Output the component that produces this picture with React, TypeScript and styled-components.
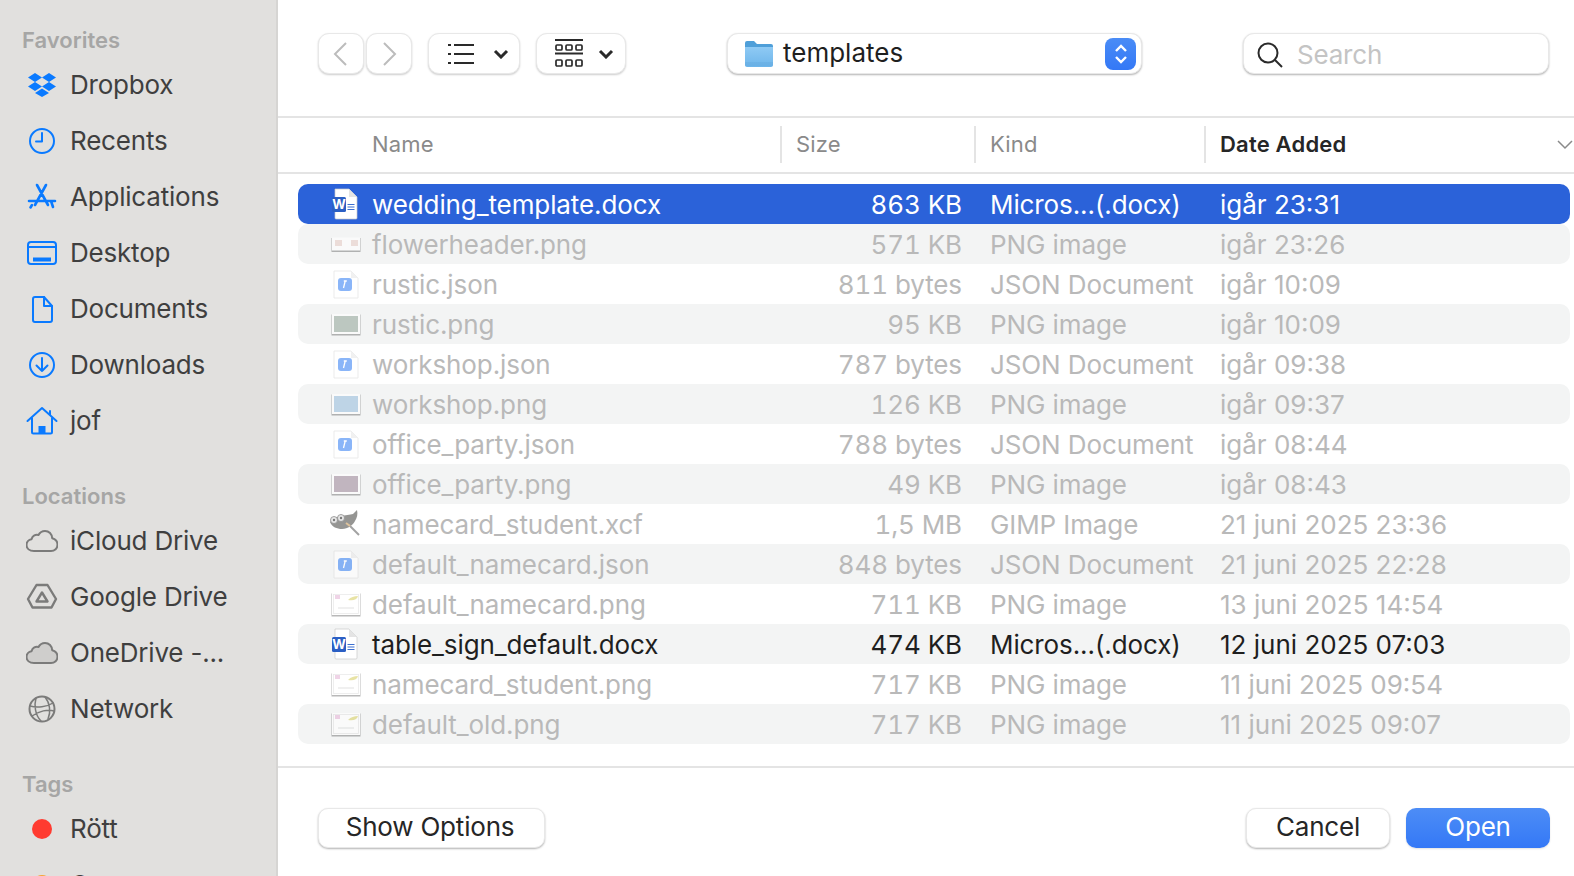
import styled, { createGlobalStyle } from "styled-components";
import type { ReactNode } from "react";

const GlobalStyle = createGlobalStyle`
  html, body {
    margin: 0;
    padding: 0;
    background: #fff;
    overflow: hidden;
  }
  * {
    box-sizing: border-box;
  }
`;

const COLUMNS = "74px 408px 194px 230px 1fr";

const Window = styled.div`
  width: 1574px;
  height: 876px;
  display: flex;
  overflow: hidden;
  font-family: Inter, "Liberation Sans", sans-serif;
  font-size: 26px;
  letter-spacing: -0.2px;
  color: #1f1f1f;
`;

const Sidebar = styled.aside`
  width: 278px;
  flex: none;
  padding: 24px 0 0 22px;
  background: #e1e0de;
  border-right: 2px solid #d6d5d3;
`;

const SectionTitle = styled.div<{ $first?: boolean }>`
  height: 32px;
  margin-top: ${({ $first }) => ($first ? 0 : "32px")};
  line-height: 32px;
  font-size: 22px;
  font-weight: 600;
  letter-spacing: 0;
  color: #a6a6a5;
`;

const SideItem = styled.div`
  height: 56px;
  display: flex;
  align-items: center;
  padding-top: 1px;
  color: #3f3f3f;
`;

const SideIcon = styled.span`
  width: 48px;
  height: 34px;
  flex: none;
  display: flex;
  align-items: center;
  padding-left: 4px;
  svg {
    display: block;
  }
`;

const TagDot = styled.span<{ $color: string }>`
  width: 20px;
  height: 20px;
  margin-left: 6px;
  border-radius: 50%;
  background: ${({ $color }) => $color};
`;

const Main = styled.main`
  flex: 1;
  min-width: 0;
  display: flex;
  flex-direction: column;
`;

const Toolbar = styled.div`
  height: 118px;
  flex: none;
  display: flex;
  align-items: flex-start;
  padding: 33px 25px 0 40px;
  border-bottom: 2px solid #e4e4e4;
`;

const ToolButton = styled.div<{ $width: number; $gap?: number }>`
  width: ${({ $width }) => $width}px;
  height: 41px;
  flex: none;
  margin-left: ${({ $gap }) => $gap ?? 0}px;
  display: flex;
  align-items: center;
  justify-content: center;
  gap: ${({ $width }) => ($width > 91 ? 18 : 15)}px;
  padding-left: ${({ $width }) => ($width > 60 ? 7 : 0)}px;
  background: #fff;
  border: 1px solid #e8e8e8;
  border-radius: 11px;
  box-shadow: 0 1px 2px rgba(0, 0, 0, 0.2);
`;

const PathControl = styled.div`
  width: 415px;
  height: 41px;
  flex: none;
  margin-left: 101px;
  display: flex;
  align-items: center;
  padding: 0 5px 0 16px;
  border: 1px solid #e8e8e8;
  border-radius: 11px;
  background: #fff;
  box-shadow: 0 1px 2px rgba(0, 0, 0, 0.3);
`;

const PathLabel = styled.span`
  flex: 1;
  margin-left: 9px;
  padding-bottom: 2px;
  letter-spacing: 0;
`;

const Stepper = styled.span`
  width: 31px;
  height: 32px;
  border-radius: 8px;
  display: flex;
  align-items: center;
  justify-content: center;
  background: linear-gradient(#4a8cf6, #3478f6);
`;

const SearchBox = styled.div`
  width: 306px;
  height: 41px;
  flex: none;
  margin-left: auto;
  display: flex;
  align-items: center;
  padding: 2px 0 0 12px;
  gap: 13px;
  border: 1px solid #e8e8e8;
  border-radius: 11px;
  color: #c4c4c4;
  background: #fff;
  box-shadow: 0 1px 2px rgba(0, 0, 0, 0.3);
`;

const HeaderRow = styled.div`
  height: 56px;
  flex: none;
  display: grid;
  grid-template-columns: ${COLUMNS};
  align-items: center;
  margin-left: 20px;
  padding-bottom: 4px;
  font-size: 22px;
  letter-spacing: 0.2px;
  color: #8a8a8a;
  position: relative;
  &::after {
    content: "";
    position: absolute;
    left: -20px;
    right: 0;
    bottom: 0;
    border-bottom: 2px solid #e4e4e4;
  }
`;

const HeaderCell = styled.div<{ $active?: boolean; $divider?: boolean }>`
  height: 37px;
  line-height: 37px;
  padding-left: ${({ $divider }) => ($divider ? "14px" : 0)};
  border-left: ${({ $divider }) => ($divider ? "2px solid #e4e4e4" : "none")};
  font-weight: ${({ $active }) => ($active ? 600 : 400)};
  color: ${({ $active }) => ($active ? "#262626" : "inherit")};
  display: flex;
  align-items: center;
  justify-content: space-between;
`;

const FileList = styled.div`
  padding: 10px 4px 0 20px;
  height: 594px;
  flex: none;
  border-bottom: 2px solid #e4e4e4;
  letter-spacing: -0.1px;
`;

const FileRow = styled.div<{ $selected?: boolean; $striped?: boolean; $dim?: boolean }>`
  height: 40px;
  display: grid;
  grid-template-columns: ${COLUMNS};
  align-items: center;
  border-radius: 10px;
  background: ${({ $selected, $striped }) =>
    $selected ? "#2b62d9" : $striped ? "#f3f4f4" : "transparent"};
  color: ${({ $selected, $dim }) =>
    $selected ? "#fff" : $dim ? "#b9b9b9" : "#1f1f1f"};
`;

const FileIconCell = styled.div<{ $dim?: boolean }>`
  height: 40px;
  display: flex;
  align-items: center;
  justify-content: flex-end;
  padding-right: 10px;
  opacity: ${({ $dim }) => ($dim ? 0.6 : 1)};
  svg {
    display: block;
  }
`;

const SizeCell = styled.div`
  text-align: right;
  padding-right: 12px;
  font-variant-numeric: tabular-nums;
`;

const TextCell = styled.div`
  padding-left: 16px;
  white-space: nowrap;
`;

const DateCell = styled(TextCell)`
  letter-spacing: 0;
`;

const Footer = styled.div`
  flex: 1;
  display: flex;
  align-items: flex-start;
  padding: 40px 24px 0 40px;
`;

const FooterButton = styled.div<{ $width: number; $primary?: boolean; $push?: boolean }>`
  width: ${({ $width }) => $width}px;
  height: 40px;
  flex: none;
  margin-left: ${({ $push }) => ($push ? "auto" : 0)};
  margin-right: ${({ $push }) => ($push ? "16px" : 0)};
  line-height: ${({ $primary }) => ($primary ? "38px" : "36px")};
  text-align: center;
  border: ${({ $primary }) => ($primary ? "none" : "1px solid #e8e8e8")};
  border-radius: 10px;
  color: ${({ $primary }) => ($primary ? "#fff" : "#262626")};
  background: ${({ $primary }) =>
    $primary ? "linear-gradient(#4d8df6, #3478f6)" : "#fff"};
  box-shadow: ${({ $primary }) =>
    $primary ? "0 1px 2px rgba(0, 0, 0, 0.12)" : "0 1px 2px rgba(0, 0, 0, 0.3)"};
`;

const OptionsButton = styled(FooterButton)`
  padding-right: 3px;
`;

const BLUE = "#0a7aff";
const GREY = "#7b7b7a";

function Glyph({ children, color }: { children: ReactNode; color: string }) {
  return (
    <svg
      width="32"
      height="32"
      viewBox="0 0 32 32"
      fill="none"
      stroke={color}
      strokeWidth="2"
      strokeLinecap="round"
      strokeLinejoin="round"
    >
      {children}
    </svg>
  );
}

const sideIcons: Record<string, ReactNode> = {
  dropbox: (
    <Glyph color={BLUE}>
      <path
        fill={BLUE}
        stroke="none"
        d="M9 4 16 8.500 9 13 2 8.500ZM23 4 30 8.500 23 13 16 8.500ZM9 13 16 17.500 9 22 2 17.500ZM23 13 30 17.500 23 22 16 17.500ZM16 19.500 23 24 16 28 9 24Z"
      />
    </Glyph>
  ),
  recents: (
    <Glyph color={BLUE}>
      <circle cx="16" cy="16" r="12" />
      <path d="M16 8v8.500h-6" />
    </Glyph>
  ),
  apps: (
    <Glyph color={BLUE}>
      <path d="M11 4l11 20M20 4 9 24M3 20h26M6 24l-1.500 2.500M25 20l2 6" strokeWidth="2.600" />
    </Glyph>
  ),
  desktop: (
    <Glyph color={BLUE}>
      <rect x="2" y="5" width="28" height="22" rx="3" />
      <path d="M2 10h28" />
      <path d="M7 20.500h18v4H7z" fill={BLUE} stroke="none" />
    </Glyph>
  ),
  documents: (
    <Glyph color={BLUE}>
      <path d="M7 6a2 2 0 0 1 2-2h9l8 9v14a2 2 0 0 1-2 2H9a2 2 0 0 1-2-2Z" />
      <path d="M18 4v9h8" />
    </Glyph>
  ),
  downloads: (
    <Glyph color={BLUE}>
      <circle cx="16" cy="16" r="12" />
      <path d="M16 9v13M10.500 16.500 16 22l5.500-5.500" />
    </Glyph>
  ),
  home: (
    <Glyph color={BLUE}>
      <path d="M1.500 16 16 3l14.500 13M6 13v14a1.500 1.500 0 0 0 1.500 1.500h17A1.500 1.500 0 0 0 26 27V13M24 6v4" />
      <path d="M12.500 21h7v7.500h-7z" fill={BLUE} stroke="none" />
    </Glyph>
  ),
  icloud: (
    <Glyph color={GREY}>
      <path d="M8 26C3.500 26 .5 23.500.5 20c0-3 2.200-5.400 5-5.800C6.500 10.500 9.800 9 12.500 10 14 7.200 16.500 6 19 6c4 0 7 3 7.200 7.200 3 .8 5.300 3.400 5.300 6.500 0 3.600-2.800 6.300-6.500 6.300Z" />
    </Glyph>
  ),
  gdrive: (
    <Glyph color={GREY}>
      <path d="M10.500 4h11L30 18l-4.500 8.500h-19L2 18Z" strokeWidth="2.400" />
      <path d="M16 11.500 21.500 20.500h-11Z" strokeWidth="2.400" />
    </Glyph>
  ),
  onedrive: (
    <Glyph color={GREY}>
      <path
        fill="#cfcecc"
        d="M8 26C3.500 26 .5 23.500.5 20c0-3 2.200-5.400 5-5.800C6.500 10.500 9.800 9 12.500 10 14 7.200 16.500 6 19 6c4 0 7 3 7.200 7.200 3 .8 5.300 3.400 5.300 6.500 0 3.600-2.800 6.300-6.500 6.300Z"
      />
    </Glyph>
  ),
  network: (
    <Glyph color={GREY}>
      <circle cx="16" cy="16" r="12.500" />
      <path
        d="M4 13c7 2 17 1 23-3M6 23c7-5 16-7 22-5M10 5c-2 7-1 17 5 23M19 4c5 6 6 15 3 22"
        strokeWidth="1.500"
      />
    </Glyph>
  ),
};

const favorites = [
  ["dropbox", "Dropbox"],
  ["recents", "Recents"],
  ["apps", "Applications"],
  ["desktop", "Desktop"],
  ["documents", "Documents"],
  ["downloads", "Downloads"],
  ["home", "jof"],
];

const locations = [
  ["icloud", "iCloud Drive"],
  ["gdrive", "Google Drive"],
  ["onedrive", "OneDrive -..."],
  ["network", "Network"],
];

type FileKind = "word" | "json" | "gimp" | "card" | "banner" | "green" | "sky" | "mauve";

type FileEntry = {
  icon: FileKind;
  name: string;
  size: string;
  kind: string;
  date: string;
};

const files: FileEntry[] = [
  { icon: "word", name: "wedding_template.docx", size: "863 KB", kind: "Micros...(.docx)", date: "igår 23:31" },
  { icon: "banner", name: "flowerheader.png", size: "571 KB", kind: "PNG image", date: "igår 23:26" },
  { icon: "json", name: "rustic.json", size: "811 bytes", kind: "JSON Document", date: "igår 10:09" },
  { icon: "green", name: "rustic.png", size: "95 KB", kind: "PNG image", date: "igår 10:09" },
  { icon: "json", name: "workshop.json", size: "787 bytes", kind: "JSON Document", date: "igår 09:38" },
  { icon: "sky", name: "workshop.png", size: "126 KB", kind: "PNG image", date: "igår 09:37" },
  { icon: "json", name: "office_party.json", size: "788 bytes", kind: "JSON Document", date: "igår 08:44" },
  { icon: "mauve", name: "office_party.png", size: "49 KB", kind: "PNG image", date: "igår 08:43" },
  { icon: "gimp", name: "namecard_student.xcf", size: "1,5 MB", kind: "GIMP Image", date: "21 juni 2025 23:36" },
  { icon: "json", name: "default_namecard.json", size: "848 bytes", kind: "JSON Document", date: "21 juni 2025 22:28" },
  { icon: "card", name: "default_namecard.png", size: "711 KB", kind: "PNG image", date: "13 juni 2025 14:54" },
  { icon: "word", name: "table_sign_default.docx", size: "474 KB", kind: "Micros...(.docx)", date: "12 juni 2025 07:03" },
  { icon: "card", name: "namecard_student.png", size: "717 KB", kind: "PNG image", date: "11 juni 2025 09:54" },
  { icon: "card", name: "default_old.png", size: "717 KB", kind: "PNG image", date: "11 juni 2025 09:07" },
];

function Thumb({ fill, top = 6, height = 20, children }: { fill: string; top?: number; height?: number; children?: ReactNode }) {
  return (
    <svg width="32" height="32" viewBox="0 0 32 32">
      <rect x="1.500" y={top + 0.5} width="29" height={height + 1} fill="#000" opacity="0.45" />
      <rect x="2" y={top} width="28" height={height} fill="#fff" />
      {fill !== "#fff" && <rect x="4" y={top + 2} width="24" height={height - 4} fill={fill} />}
      {children}
    </svg>
  );
}

function FileIcon({ kind }: { kind: FileKind }) {
  switch (kind) {
    case "word":
      return (
        <svg width="32" height="34" viewBox="0 0 32 34">
          <path d="M5 2h14l8 8v21a1 1 0 0 1-1 1H6a1 1 0 0 1-1-1Z" fill="#fff" stroke="#c9c9c9" strokeWidth="0.700" />
          <path d="M19 2v8h8Z" fill="#e4e4e4" />
          <rect x="2" y="10" width="14" height="15" rx="1.500" fill="#2b5fc4" />
          <text x="9" y="22" textAnchor="middle" fontSize="13" fontWeight="700" fill="#fff" fontFamily="Inter, sans-serif">
            W
          </text>
          <path d="M17.500 17.500h7M17.500 20h7M17.500 22.500h7" stroke="#3c6fd0" strokeWidth="1.100" />
        </svg>
      );
    case "json":
      return (
        <svg width="32" height="34" viewBox="0 0 32 34">
          <path d="M4 4h17l7 7v20H4Z" fill="#fff" stroke="#d8d8d8" strokeWidth="0.800" />
          <path d="M21 4v7h7Z" fill="#e8e8e8" />
          <rect x="8" y="11" width="14" height="13" rx="3" fill="#3d85f5" />
          <path d="M13.500 21 15.200 14M13.800 14h3" stroke="#fff" strokeWidth="1.300" fill="none" />
        </svg>
      );
    case "gimp":
      return (
        <svg width="34" height="30" viewBox="0 0 34 30">
          <path d="M2 13C4 9 9 8 13 7c4-1 9-1 12-2l4-4c1 4 0 8-2 11-2 4-7 8-13 8-5 0-10-2-12-7Z" fill="#4f4f4c" />
          <circle cx="6" cy="11" r="3.500" fill="#d9d9d9" stroke="#444" strokeWidth="0.800" />
          <circle cx="13" cy="9" r="3.500" fill="#d9d9d9" stroke="#444" strokeWidth="0.800" />
          <circle cx="6" cy="11" r="1.200" fill="#222" />
          <circle cx="13" cy="9" r="1.200" fill="#222" />
          <path d="M21 16l10 10" stroke="#666" strokeWidth="2" />
          <path d="M18 14l4 3" stroke="#c89a5a" strokeWidth="2" />
        </svg>
      );
    case "banner":
      return (
        <Thumb fill="#fff" top={9.5} height={13}>
          <rect x="5" y="12" width="7" height="6" fill="#e8cfc8" />
          <rect x="21" y="12" width="7" height="6" fill="#e8cfc8" />
        </Thumb>
      );
    case "green":
      return <Thumb fill="#98aa9e" />;
    case "sky":
      return <Thumb fill="#9cbfdd" />;
    case "mauve":
      return <Thumb fill="#a08c9c" />;
    default:
      return (
        <Thumb fill="#fff" top={5} height={22}>
          <rect x="3.500" y="6.500" width="25" height="19" fill="none" stroke="#dcdcdc" strokeWidth="0.800" />
          <path d="M5 7h5v4H5Z" fill="#e6b8d8" />
          <path d="M18 12c3-3 6-4 10-4-1 4-5 5-10 4Z" fill="#d9d26a" />
          <path d="M8 20h16" stroke="#cfcfcf" strokeWidth="1" />
        </Thumb>
      );
  }
}

export default function App() {
  return (
    <Window>
      <GlobalStyle />
      <Sidebar>
        <SectionTitle $first>Favorites</SectionTitle>
        {favorites.map(([icon, label]) => (
          <SideItem key={label}>
            <SideIcon>{sideIcons[icon]}</SideIcon>
            {label}
          </SideItem>
        ))}
        <SectionTitle>Locations</SectionTitle>
        {locations.map(([icon, label]) => (
          <SideItem key={label}>
            <SideIcon>{sideIcons[icon]}</SideIcon>
            {label}
          </SideItem>
        ))}
        <SectionTitle>Tags</SectionTitle>
        <SideItem>
          <SideIcon>
            <TagDot $color="#ff3b30" />
          </SideIcon>
          Rött
        </SideItem>
        <SideItem>
          <SideIcon>
            <TagDot $color="#f7a535" />
          </SideIcon>
          Orange
        </SideItem>
      </Sidebar>

      <Main>
        <Toolbar>
          <ToolButton $width={46}>
            <svg width="20" height="26" viewBox="0 0 20 26" fill="none" stroke="#bcbcbc" strokeWidth="2">
              <path d="M15 2 4 13l11 11" />
            </svg>
          </ToolButton>
          <ToolButton $width={46} $gap={2}>
            <svg width="20" height="26" viewBox="0 0 20 26" fill="none" stroke="#bcbcbc" strokeWidth="2">
              <path d="m5 2 11 11L5 24" />
            </svg>
          </ToolButton>
          <ToolButton $width={92} $gap={16}>
            <svg width="28" height="22" viewBox="0 0 28 22" fill="none" stroke="#2a2a2a" strokeWidth="2">
              <path d="M7 2h20M7 11h20M7 20h20M1 2h3M1 11h3M1 20h3" />
            </svg>
            <svg width="16" height="10" viewBox="0 0 16 10" fill="none" stroke="#2a2a2a" strokeWidth="3">
              <path d="m2 2 6 6 6-6" />
            </svg>
          </ToolButton>
          <ToolButton $width={90} $gap={16}>
            <svg width="28" height="30" viewBox="0 0 28 30" fill="none" stroke="#2a2a2a" strokeWidth="1.700">
              <path d="M0 1h28M0 14.500h28" strokeWidth="2" />
              <rect x="1" y="6" width="6" height="5" rx="1" />
              <rect x="11" y="6" width="6" height="5" rx="1" />
              <rect x="21" y="6" width="6" height="5" rx="1" />
              <rect x="1" y="21" width="6" height="6" rx="1" />
              <rect x="11" y="21" width="6" height="6" rx="1" />
              <rect x="21" y="21" width="6" height="6" rx="1" />
            </svg>
            <svg width="16" height="10" viewBox="0 0 16 10" fill="none" stroke="#2a2a2a" strokeWidth="3">
              <path d="m2 2 6 6 6-6" />
            </svg>
          </ToolButton>
          <PathControl>
            <svg width="30" height="28" viewBox="0 0 30 28">
              <defs>
                <linearGradient id="folderBody" x1="0" y1="0" x2="0" y2="1">
                  <stop offset="0" stopColor="#8fcaf4" />
                  <stop offset="1" stopColor="#6db5ea" />
                </linearGradient>
              </defs>
              <path d="M1 3a2 2 0 0 1 2-2h7l3 3h14a2 2 0 0 1 2 2v4H1Z" fill="#4f9fd9" />
              <path d="M1 7h28v18a2 2 0 0 1-2 2H3a2 2 0 0 1-2-2Z" fill="url(#folderBody)" />
              <path d="M1 23h28M1 25h28" stroke="#5ea6dd" strokeWidth="0.700" />
            </svg>
            <PathLabel>templates</PathLabel>
            <Stepper>
              <svg width="16" height="24" viewBox="0 0 16 24" fill="none" stroke="#fff" strokeWidth="2.400">
                <path d="m3 9 5-5 5 5M3 15l5 5 5-5" />
              </svg>
            </Stepper>
          </PathControl>
          <SearchBox>
            <svg width="28" height="28" viewBox="0 0 28 28" fill="none" stroke="#2a2a2a" strokeWidth="2">
              <circle cx="12" cy="12" r="9.500" />
              <path d="m19 19 7 7" />
            </svg>
            Search
          </SearchBox>
        </Toolbar>

        <HeaderRow>
          <div />
          <HeaderCell>Name</HeaderCell>
          <HeaderCell $divider>Size</HeaderCell>
          <HeaderCell $divider>Kind</HeaderCell>
          <HeaderCell $divider $active>
            Date Added
            <svg width="18" height="12" viewBox="0 0 18 12" fill="none" stroke="#8a8a8a" strokeWidth="1.500">
              <path d="m2 3 7 7 7-7" />
            </svg>
          </HeaderCell>
        </HeaderRow>

        <FileList>
          {files.map((file, index) => {
            const selected = index === 0;
            const dim = !file.name.endsWith(".docx");
            return (
              <FileRow key={file.name} $selected={selected} $striped={index % 2 === 1} $dim={dim}>
                <FileIconCell $dim={dim}>
                  <FileIcon kind={file.icon} />
                </FileIconCell>
                <div>{file.name}</div>
                <SizeCell>{file.size}</SizeCell>
                <TextCell>{file.kind}</TextCell>
                <DateCell>{file.date}</DateCell>
              </FileRow>
            );
          })}
        </FileList>

        <Footer>
          <OptionsButton $width={227}>Show Options</OptionsButton>
          <FooterButton $width={144} $push>
            Cancel
          </FooterButton>
          <FooterButton $width={144} $primary>
            Open
          </FooterButton>
        </Footer>
      </Main>
    </Window>
  );
}
